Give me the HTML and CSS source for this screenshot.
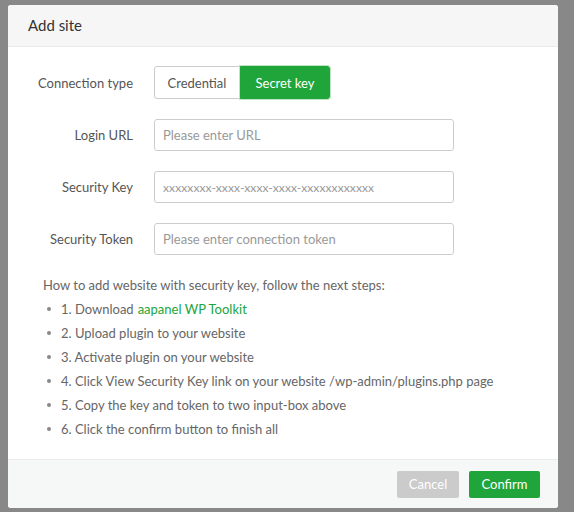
FILE: index.html
```html
<!DOCTYPE html>
<html>
<head>
<meta charset="utf-8">
<link rel="stylesheet" href="styles.css">
</head>
<body>
<div class="dialog">
  <div class="dialog-header">Add site</div>
  <div class="dialog-body">
    <div class="form-row type-row">
      <div class="label">Connection type</div>
      <div class="toggle">
        <button class="toggle-btn">Credential</button>
        <button class="toggle-btn active">Secret key</button>
      </div>
    </div>
    <div class="form-row">
      <div class="label">Login URL</div>
      <input class="input" type="text" placeholder="Please enter URL">
    </div>
    <div class="form-row">
      <div class="label">Security Key</div>
      <input class="input key" type="text" placeholder="xxxxxxxx-xxxx-xxxx-xxxx-xxxxxxxxxxxx">
    </div>
    <div class="form-row last">
      <div class="label">Security Token</div>
      <input class="input" type="text" placeholder="Please enter connection token">
    </div>
    <div class="help">
      <p class="help-title">How to add website with security key, follow the next steps:</p>
      <ul class="steps">
        <li>1. Download <a class="link" href="#">aapanel WP Toolkit</a></li>
        <li>2. Upload plugin to your website</li>
        <li>3. Activate plugin on your website</li>
        <li>4. Click View Security Key link on your website /wp-admin/plugins.php page</li>
        <li>5. Copy the key and token to two input-box above</li>
        <li>6. Click the confirm button to finish all</li>
      </ul>
    </div>
  </div>
  <div class="dialog-footer">
    <button class="btn btn-cancel">Cancel</button>
    <button class="btn btn-confirm">Confirm</button>
  </div>
</div>
</body>
</html>
```

FILE: styles.css
```css
* { box-sizing: border-box; }
html, body { margin: 0; padding: 0; }
body {
  background: #888888;
  font-family: "Lato", "Liberation Sans", sans-serif;
  font-size: 13px;
  color: #555;
  width: 574px;
  height: 512px;
  overflow: hidden;
}
.dialog {
  margin: 5px 0 0 8px;
  width: 550px;
  height: 503px;
  background: #fff;
  border-radius: 3px;
  overflow: hidden;
  display: flex;
  flex-direction: column;
}
.dialog-header {
  height: 42px;
  background: #f6f6f6;
  border-bottom: 1px solid #eaeaea;
  padding: 0 20px;
  font-size: 15px;
  line-height: 41px;
  color: #333;
}
.dialog-body {
  flex: 1;
  padding: 19px 30px 0 30px;
}
.form-row {
  display: flex;
  align-items: center;
  margin-bottom: 20px;
}
.form-row.last { margin-bottom: 0; }
.label {
  width: 95px;
  margin-right: 21px;
  text-align: right;
  color: #555;
  white-space: nowrap;
}
.toggle {
  display: flex;
}
.toggle-btn {
  font-family: inherit;
  font-size: 13px;
  height: 33px;
  width: 86px;
  padding: 0;
  border: 1px solid #ccc;
  background: #fff;
  color: #555;
  border-radius: 3px 0 0 3px;
}
.toggle-btn.active {
  background: #20a53a;
  border: 1px solid #20a53a;
  color: #fff;
  border-radius: 0 3px 3px 0;
  box-shadow: 0 0 0 1px #bde5c5;
  width: 90px;
}
.input {
  width: 300px;
  height: 32px;
  border: 1px solid #ccc;
  border-radius: 3px;
  padding: 0 8px;
  font-family: inherit;
  font-size: 13px;
  color: #555;
}
.input::placeholder { color: #999; }
.input.key::placeholder { font-size: 12px; letter-spacing: 0.1px; }
.help {
  padding: 18px 0 0 5px;
  color: #666;
}
.help-title {
  margin: 0;
  line-height: 24px;
}
.steps {
  margin: 0;
  padding: 0 0 0 4px;
  list-style: none;
}
.steps li {
  line-height: 24px;
  display: flex;
  align-items: center;
}
.steps li::before {
  content: "";
  width: 4px;
  height: 4px;
  border-radius: 50%;
  background: #888;
  margin-right: 10px;
}
.link {
  color: #20a53a;
  text-decoration: none;
  margin-left: 4px;
}
.dialog-footer {
  height: 49px;
  background: #f6f8f8;
  border-top: 1px solid #ececec;
  display: flex;
  justify-content: flex-end;
  align-items: center;
  padding: 0 18px 0 0;
  gap: 10px;
}
.btn {
  font-family: inherit;
  font-size: 13px;
  height: 27px;
  border: none;
  border-radius: 2px;
  color: #fff;
  padding: 0;
}
.btn-cancel { width: 62px; background: #cbcbcb; }
.btn-confirm { width: 71px; background: #20a53a; }
```
